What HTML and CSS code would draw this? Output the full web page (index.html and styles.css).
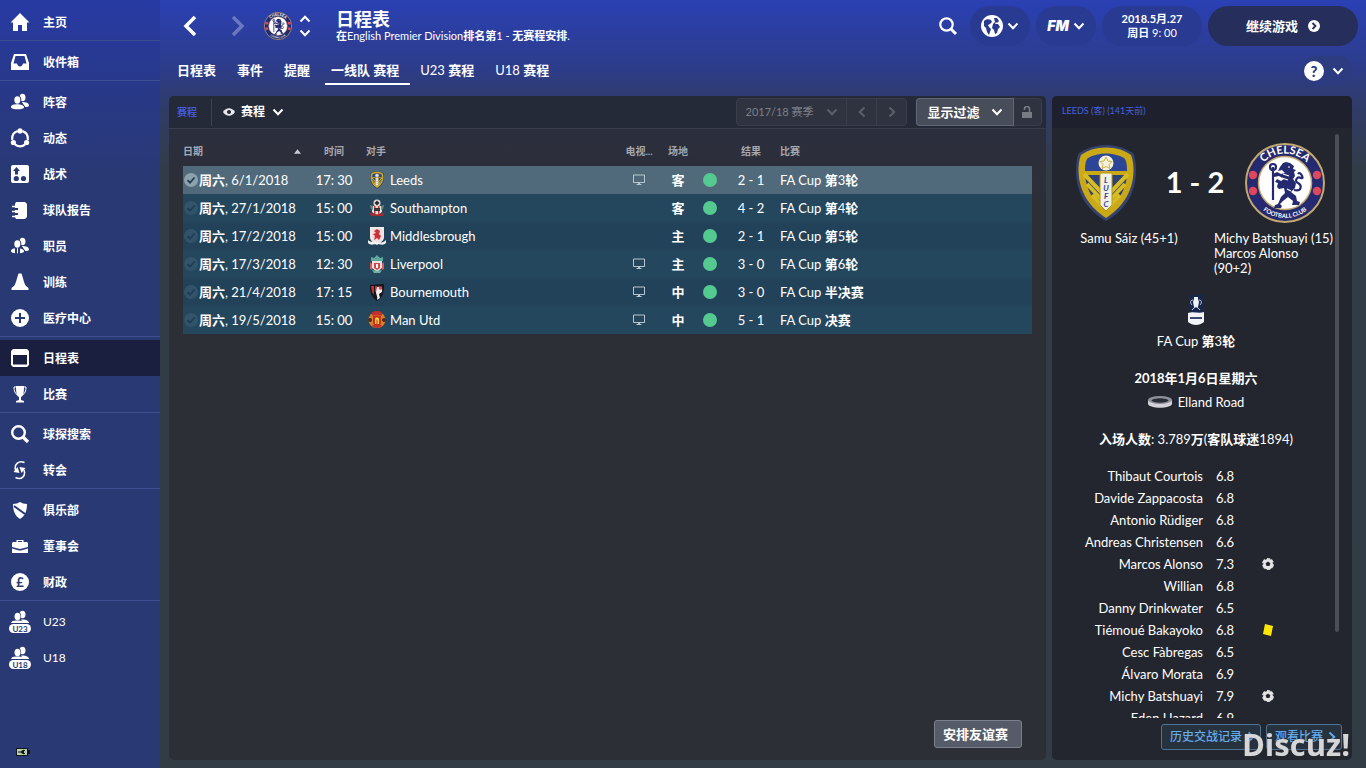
FILE: index.html
```html
<!DOCTYPE html>
<html lang="zh-CN">
<head>
    <meta charset="UTF-8">
    <meta name="viewport" content="width=device-width, initial-scale=1.0">
    <title>日程表</title>
    <link rel="stylesheet" href="styles.css">
</head>
<body>
    <!-- shared icons -->
    <svg class="defs" aria-hidden="true">
        <symbol id="chev" viewBox="0 0 12 8"><path d="M1.5 1.5 6 6.2 10.500 1.500" fill="none" stroke="currentColor" stroke-width="2"/></symbol>
        <symbol id="people" viewBox="0 0 20 20">
            <ellipse cx="12.500" cy="5.500" rx="3" ry="3.800"/><path d="M12 10c4 0 7 1 7 3.500 0 1.200-2 1.500-4 1.500z"/>
            <ellipse cx="7.500" cy="8" rx="3.800" ry="4.300" class="cut"/><path d="M0 16c0-4 4-4.500 8-4.500s7 1.500 7 4.500z" class="cut"/>
            <ellipse cx="7.300" cy="8" rx="3" ry="3.700"/><path d="M1 15c0-2 3-2.700 6.300-2.700S14 13.300 14 15.300c0 1.500-3 2-6.500 2S1 16.800 1 15z"/>
        </symbol>
        <symbol id="team" viewBox="0 0 24 24">
            <ellipse cx="14.500" cy="4.500" rx="3" ry="3.800"/><path d="M13 9.500c4-.5 8 1 8 3.500h-6z"/>
            <ellipse cx="9.500" cy="6.500" rx="3.600" ry="4.400" class="cut"/><ellipse cx="9.500" cy="6.500" rx="3" ry="3.800"/>
            <path d="M3 13c1-2.500 4-2.500 6.500-2.500S15.500 11 16 13z"/>
            <rect x="1" y="14" width="22" height="9" rx="4.500"/>
        </symbol>
        <symbol id="tick" viewBox="0 0 14 14"><circle cx="7" cy="7" r="7" fill="currentColor"/><path d="M3.500 7.200 6 9.700 10.500 4.500" fill="none" class="tick-mark" stroke-width="1.700"/></symbol>
        <symbol id="tv" viewBox="0 0 14 12"><path d="M1.500 1h11v7.500h-11zM4.500 10.500h5" fill="none" stroke="#b8c8d2" stroke-width="1"/><path d="M6 9h2v1.500H6z" fill="#b8c8d2"/></symbol>
        <symbol id="ball" viewBox="0 0 14 14"><circle cx="7" cy="7" r="6" fill="#e4e4e6"/><path d="m7 4.500 2.400 1.700-.9 2.800h-3l-.9-2.800z" fill="#23262e"/><path d="M3 1.500 5 3 6.500.5zM13.500 5l-2.300.8 2 2.200zM.5 6l2.200.5L.8 9zM4 13.500l.5-2 2 1.800zM12 12l-2-.8L9 13.500zM9.500 1l-.8 1.500L11 2z" fill="#23262e"/></symbol>
        <symbol id="leeds" viewBox="0 0 62 78">
            <path d="M31 1C43 1 51 5 58 9c2 3 3 10 3 18 0 25-14 41-30 50C15 68 1 52 1 27 1 19 2 12 4 9 11 5 19 1 31 1z" fill="#34426f"/>
            <path d="M31 3.500c11 0 19 3 25 7.500 2 5 2.500 10 2.500 16C58 50 45 65 31 74 17 65 4 50 3.500 27c0-6 .5-11 2.500-16 6-4.500 14-7.500 25-7.500z" fill="#cba916"/>
            <path d="M10 27c0-8 1-11 3-13 10-6 26-6 36 0 2 2 3 5 3 13z" fill="#2d4596"/>
            <path d="M10 31h16v32C17 55 11 44 10 31zM52 31H36v32c9-8 15-19 16-32z" fill="#2c4275"/>
            <path d="M9 30 27 49M12 40l15 16M17 51l10 11M53 30 35 49M50 40 35 56M45 51 35 62" stroke="#d8bd22" stroke-width="4"/>
            <path d="M25 29h12v32l-6 6-6-6z" fill="#f2f1e6" stroke="#b7960c"/>
            <circle cx="31" cy="19" r="7.500" fill="#f4f2df"/><path d="m31 13 2 4 4 .5-3 3 1 4-4-2-4 2 1-4-3-3 4-.5z" fill="none" stroke="#c9ae3d"/>
            <g class="lufc"><text x="31" y="39">L</text><text x="31" y="47">U</text><text x="31" y="55">F</text><text x="31" y="63">C</text></g>
        </symbol>
        <symbol id="chelsea" viewBox="0 0 80 80">
            <circle cx="40" cy="40" r="39" fill="#252a70" stroke="#c3a970" stroke-width="2"/>
            <circle cx="40" cy="40" r="26.500" fill="#fff" stroke="#c3a970" stroke-width="1.500"/>
            <path id="arc-top" d="M10.500 40a29.500 29.500 0 0 1 59 0" fill="none"/>
            <path id="arc-bottom" d="M5 40a35 35 0 0 0 70 0" fill="none"/>
            <text class="crest-top"><textPath href="#arc-top" startOffset="50%">CHELSEA</textPath></text>
            <text class="crest-bottom"><textPath href="#arc-bottom" startOffset="50%">FOOTBALL CLUB</textPath></text>
            <g fill="#e0475c"><circle cx="8" cy="32" r="4.200"/><circle cx="8" cy="48" r="4.200"/><circle cx="72" cy="32" r="4.200"/><circle cx="72" cy="48" r="4.200"/></g>
            <g fill="#252a70"><path d="m38 20 3-1 4 1 4 3-1 3 3 1-2 2 1 4-2 3 3 4-1 5-4 4 5 4 1 5 3 1-1 3h-7l1-4-5-4-5 4-3 3 2 2-1 2h-7l1-3 3-1 3-7 4-4-1-5-5 1-2-2 1-4-3-1 2-3 4 2 3-2-5-3-5 1-1-3 4-2 4 2 4-1-3-3-4 1 2-4z"/></g>
            <path d="M28 24v33M25 24a3 3 0 1 0 6 0 3 3 0 1 0-6 0M49 47c8 2 8-5 4-7s-1-7 3-5-1-8-3-4" fill="none" stroke="#252a70" stroke-width="2.200"/>
            <path d="M43 24h2M38 31l6 2M37 35l6 2M42 46l4 2" stroke="#fff" stroke-width="1.200"/>
        </symbol>
    </svg>

    <div class="app">
        <nav class="sidebar">
            <ul>
                <li><a href="#"><svg viewBox="0 0 20 20"><path d="M10 1 .5 10.500H3V19h5v-6h4v6h5v-8.500h2.500z"/></svg><b>主页</b></a></li>
            </ul>
            <ul>
                <li><a href="#"><svg viewBox="0 0 20 20"><path fill-rule="evenodd" d="M4 2h12l3 9v7H1v-7zM5.500 4 3.500 11.500H7c.5 2 1.500 3 3 3s2.500-1 3-3h3.500L14.500 4z"/></svg><b>收件箱</b></a></li>
            </ul>
            <ul>
                <li><a href="#"><svg><use href="#people"/></svg><b>阵容</b></a></li>
                <li><a href="#"><svg viewBox="0 0 20 20"><circle cx="10" cy="10.500" r="7.800" fill="none" stroke="#fff" stroke-width="2.200" stroke-dasharray="11.300 5" stroke-dashoffset="-2.500" transform="rotate(-90 10 10.500)"/><circle cx="10" cy="2.900" r="2.600"/><circle cx="3.400" cy="14.500" r="2.600"/><circle cx="16.600" cy="14.500" r="2.600"/></svg><b>动态</b></a></li>
                <li><a href="#"><svg viewBox="0 0 20 20"><rect x="1" y="1" width="18" height="18" rx="2"/><g class="cut"><circle cx="6.300" cy="14.500" r="2.600"/><circle cx="13.500" cy="14.500" r="2.600"/><path d="M5 10.500V7H3l3.500-4L10 7H8v3.500z"/></g></svg><b>战术</b></a></li>
                <li><a href="#"><svg viewBox="0 0 20 20"><path d="M6 2h9l2 2v13l-2 2H6l-1-2v-2h3v-2H5v-3h3V8H5V4z"/><path d="M2 6.500h5M2 11.500h5M2 16.500h5" stroke="#fff" stroke-width="1.500"/></svg><b>球队报告</b></a></li>
                <li><a href="#"><svg viewBox="0 0 20 20"><use href="#people"/><path d="M6 12v6M9 12v6" class="cut-line"/></svg><b>职员</b></a></li>
                <li><a href="#"><svg viewBox="0 0 20 20"><path d="M8.500 1.500h3c1.500 4 2 8 4 12l3 2.500v2h-17v-2l3-2.500c2-4 2.500-8 4-12z"/></svg><b>训练</b></a></li>
                <li><a href="#"><svg viewBox="0 0 20 20"><circle cx="10" cy="10" r="9"/><path d="M10 5v10M5 10h10" class="cut-line"/></svg><b>医疗中心</b></a></li>
            </ul>
            <ul>
                <li><a href="#" class="active"><svg viewBox="0 0 20 20"><path fill-rule="evenodd" d="M3 1h14l2 2v14l-2 2H3l-2-2V3zM3 7v9.500h14V7z"/></svg><b>日程表</b></a></li>
                <li><a href="#"><svg viewBox="0 0 20 20"><path d="M6 2h8c0 6-.5 10-3 11v3l3 1v1.500H6V17l3-1v-3C6.500 12 6 8 6 2z"/><path d="M6 3H4c0 4 1 6.500 3.500 8M14 3h2c0 4-1 6.500-3.500 8" fill="none" stroke="#fff"/></svg><b>比赛</b></a></li>
            </ul>
            <ul>
                <li><a href="#"><svg viewBox="0 0 20 20"><circle cx="8.500" cy="8.500" r="6.300" fill="none" stroke="#fff" stroke-width="2.400"/><path d="m13 13 5 5" stroke="#fff" stroke-width="3.200"/></svg><b>球探搜索</b></a></li>
                <li><a href="#"><svg viewBox="0 0 20 20"><path d="M14.500 2.500C9 0 4 4 5.500 10M5.500 17.500c6 3 10.500-1.500 8.500-7.500" fill="none" stroke="#fff" stroke-width="1.500"/><path d="m3.500 12 4-5 2 6zM15.500 8l-4 5-2-6z"/></svg><b>转会</b></a></li>
            </ul>
            <ul>
                <li><a href="#"><svg viewBox="0 0 20 20"><path d="M3 4c3 0 5-1 7-2 2 1 4 2 7 2 0 7-2 12-7 15C5 16 3 11 3 4z"/><path d="m4 6 11 8" class="cut-line"/></svg><b>俱乐部</b></a></li>
                <li><a href="#"><svg viewBox="0 0 20 20"><path fill-rule="evenodd" d="M6.500 6V4h7v2H17l1 1v4l-8 2-8-2V7l1-1zM8 6h4V5H8zM2 12.500l7 2h2l7-2V17H2z"/></svg><b>董事会</b></a></li>
                <li><a href="#"><svg viewBox="0 0 20 20"><circle cx="10" cy="10" r="9"/><text x="10" y="14.500" class="pound">£</text></svg><b>财政</b></a></li>
            </ul>
            <ul>
                <li><a href="#"><svg class="wide" viewBox="0 0 24 24"><use href="#team"/><text x="12" y="21.500" class="age">U23</text></svg>U23</a></li>
                <li><a href="#"><svg class="wide" viewBox="0 0 24 24"><use href="#team"/><text x="12" y="21.500" class="age">U18</text></svg>U18</a></li>
            </ul>
            <svg class="battery" viewBox="0 0 14 10"><path d="M0 1h12v2h2v4h-2v2H0z" fill="#11151c"/><path d="M1 2h10v6H1z" fill="#b9d3a8"/><path d="M2 5h3m4-1.500H7.500m1.500 3H7.500" stroke="#11151c"/><path d="M5 4l3-1.500v5L5 6z" fill="#11151c"/></svg>
        </nav>

        <div class="page">
            <header>
                <div class="topbar">
                    <button class="nav-btn" aria-label="后退"><svg width="16" height="22" viewBox="0 0 16 22"><path d="M13 2 4 11l9 9" fill="none" stroke="#fff" stroke-width="3.500"/></svg></button>
                    <button class="nav-btn off" aria-label="前进"><svg width="16" height="22" viewBox="0 0 16 22"><path d="m3 2 9 9-9 9" fill="none" stroke="#fff" stroke-width="3.500"/></svg></button>
                    <svg class="club"><use href="#chelsea"/></svg>
                    <div class="updown">
                        <button aria-label="上一个"><svg class="chev flip"><use href="#chev"/></svg></button>
                        <button aria-label="下一个"><svg class="chev"><use href="#chev"/></svg></button>
                    </div>
                    <div class="title">
                        <h1>日程表</h1>
                        <p><b>在</b>English Premier Division<b>排名第</b>1 - <b>无赛程安排</b>.</p>
                    </div>
                    <button class="search" aria-label="搜索"><svg width="20" height="20" viewBox="0 0 20 20"><circle cx="8.500" cy="8.500" r="6.200" fill="none" stroke="#fff" stroke-width="2.200"/><path d="m13 13 5 5" stroke="#fff" stroke-width="3"/></svg></button>
                    <button class="pill" aria-label="世界"><svg width="22" height="22" viewBox="0 0 22 22"><circle cx="11" cy="11" r="11" fill="#fff"/><path d="M3 6c2-2 5-2 7-1l1 2-2 2-2 1 1 2 2 2-1 3-1 3-2-3-1-4-2-2zM13 3l3 0 2 3-2 2-1-1-1 2 3 0 2 3-2 2-1 4-2 1-1-4-2-2 1-4 2-2z" fill="#2a3a8c"/></svg><svg class="chev"><use href="#chev"/></svg></button>
                    <button class="pill fm"><i>FM</i><svg class="chev"><use href="#chev"/></svg></button>
                    <div class="pill date"><b>2018.5月.27</b><span><b>周日</b> 9: 00</span></div>
                    <button class="pill continue">继续游戏<svg width="12" height="12" viewBox="0 0 12 12"><circle cx="6" cy="6" r="6" fill="#fff"/><path d="m4.500 3 3 3-3 3" fill="none" stroke="#262f5c" stroke-width="1.800"/></svg></button>
                </div>
                <div class="subbar">
                    <nav class="tabs">
                        <a href="#"><b>日程表</b></a>
                        <a href="#"><b>事件</b></a>
                        <a href="#"><b>提醒</b></a>
                        <a href="#" class="on"><b>一线队 赛程</b></a>
                        <a href="#">U23 <b>赛程</b></a>
                        <a href="#">U18 <b>赛程</b></a>
                    </nav>
                    <button class="help" aria-label="帮助"><span>?</span><svg class="chev"><use href="#chev"/></svg></button>
                </div>
            </header>

            <main>
                <section class="panel fixtures">
                    <div class="bar">
                        <h2>赛程</h2>
                        <label class="view">
                            <svg width="12" height="8" viewBox="0 0 12 8"><path d="M0 4c3-5 9-5 12 0-3 5-9 5-12 0z" fill="#e6e8ec"/><circle cx="6" cy="4" r="2" fill="#252a38"/></svg>
                            <select aria-label="视图"><option>赛程</option></select>
                            <svg class="chev"><use href="#chev"/></svg>
                        </label>
                        <div class="group season">
                            <label><select aria-label="赛季"><option>2017/18 赛季</option></select><svg class="chev"><use href="#chev"/></svg></label>
                            <button aria-label="上个赛季"><svg class="chev left"><use href="#chev"/></svg></button>
                            <button aria-label="下个赛季"><svg class="chev right"><use href="#chev"/></svg></button>
                        </div>
                        <div class="group">
                            <button class="filter">显示过滤<svg class="chev"><use href="#chev"/></svg></button>
                            <button aria-label="锁定"><svg width="12" height="12" viewBox="0 0 12 12"><path d="M1 6h10v6H1z" fill="#777b84"/><path d="M3.500 4V3a2.500 2.500 0 0 1 5 0v3" fill="none" stroke="#777b84" stroke-width="1.600"/></svg></button>
                        </div>
                    </div>

                    <table class="matches">
                        <thead>
                            <tr>
                                <th class="c-date">日期<svg class="sort" viewBox="0 0 8 5"><path d="M4 0l4 5H0z" fill="#c8cad0"/></svg></th>
                                <th class="c-time">时间</th>
                                <th class="c-team">对手</th>
                                <th class="c-tv">电视...</th>
                                <th class="c-venue">场地</th>
                                <th class="c-dot"></th>
                                <th class="c-result">结果</th>
                                <th class="c-comp">比赛</th>
                            </tr>
                        </thead>
                        <tbody>
                            <tr class="selected">
                                <td><svg class="tick"><use href="#tick"/></svg><b>周六</b>, 6/1/2018</td>
                                <td>17: 30</td>
                                <td><svg class="crest"><use href="#leeds"/></svg>Leeds</td>
                                <td><svg class="tv"><use href="#tv"/></svg></td>
                                <td><b>客</b></td>
                                <td><span class="win"></span></td>
                                <td>2 - 1</td>
                                <td>FA Cup <b>第</b>3<b>轮</b></td>
                            </tr>
                            <tr>
                                <td><svg class="tick"><use href="#tick"/></svg><b>周六</b>, 27/1/2018</td>
                                <td>15: 00</td>
                                <td><svg class="crest" viewBox="0 0 18 18"><circle cx="9" cy="4" r="3.500" fill="#e8dfd4"/><path d="M6.500 4 9 1.500 11.500 4 9 6.500z" fill="#2a2b30"/><path d="M4 7h10v6l-5 4-5-4z" fill="#d9e4dc"/><path d="M6 7h1.500v8H6zM10 7h1.500v8H10z" fill="#c9343a"/><path d="M2 6l3 1v4L3 10zM16 6l-3 1v4l2-1z" fill="#6b8a76"/><path d="M1 13c4 3 12 3 16 0l-2 4H3z" fill="#a52a30"/><path d="M6 9h6v3H6z" fill="#393439"/></svg>Southampton</td>
                                <td></td>
                                <td><b>客</b></td>
                                <td><span class="win"></span></td>
                                <td>4 - 2</td>
                                <td>FA Cup <b>第</b>4<b>轮</b></td>
                            </tr>
                            <tr>
                                <td><svg class="tick"><use href="#tick"/></svg><b>周六</b>, 17/2/2018</td>
                                <td>15: 00</td>
                                <td><svg class="crest" viewBox="0 0 18 18"><path d="M2 0h14v10c0 4-4 6-7 8-3-2-7-4-7-8z" fill="#eee9e8"/><path d="M4 2h10v8c0 2-2 4-5 5-3-1-5-3-5-5z" fill="#f5dcdc"/><path d="M6 4l3-2 3 2-1 3 2 2-2 4-2-2-3 2 1-4-2-2 3-1z" fill="#cc2f36"/><path d="M0 13c3 3 6 1 9 2s6 1 9-2v3c-3 3-6 1-9 1s-6 2-9-1z" fill="#f2f2f2"/></svg>Middlesbrough</td>
                                <td></td>
                                <td><b>主</b></td>
                                <td><span class="win"></span></td>
                                <td>2 - 1</td>
                                <td>FA Cup <b>第</b>5<b>轮</b></td>
                            </tr>
                            <tr>
                                <td><svg class="tick"><use href="#tick"/></svg><b>周六</b>, 17/3/2018</td>
                                <td>12: 30</td>
                                <td><svg class="crest" viewBox="0 0 18 18"><path d="M3 2l3 1 3-3 3 3 3-1v4H3z" fill="#5ca99b"/><path d="M4 6h10v7l-5 4-5-4z" fill="#f0dfdf"/><path d="M6 8h6v5l-3 2-3-2z" fill="#d2454d"/><path d="M8 9h2v4H8z" fill="#fff"/><path d="M2 7l2 2v6l-2-1zM16 7l-2 2v6l2-1z" fill="#d15d5d"/><path d="M4 15c3 1 7 1 10 0l-2 3H6z" fill="#71b2a6"/></svg>Liverpool</td>
                                <td><svg class="tv"><use href="#tv"/></svg></td>
                                <td><b>主</b></td>
                                <td><span class="win"></span></td>
                                <td>3 - 0</td>
                                <td>FA Cup <b>第</b>6<b>轮</b></td>
                            </tr>
                            <tr>
                                <td><svg class="tick"><use href="#tick"/></svg><b>周六</b>, 21/4/2018</td>
                                <td>17: 15</td>
                                <td><svg class="crest" viewBox="0 0 18 18"><path d="M2 2c5 0 9-1 14-1 0 9-1 13-7 17C3 14 2 9 2 2z" fill="#16151a"/><path d="M3 3h3v9L4 9zM7 3h2v6H7z" fill="#c62e38"/><path d="M9 4c3-1 6 1 5 5l-3 2 1 4-3 2c1-4-1-5-1-8z" fill="#f0eded"/><circle cx="12.500" cy="5" r="1.800" fill="#db4850"/></svg>Bournemouth</td>
                                <td><svg class="tv"><use href="#tv"/></svg></td>
                                <td><b>中</b></td>
                                <td><span class="win"></span></td>
                                <td>3 - 0</td>
                                <td>FA Cup <b>半决赛</b></td>
                            </tr>
                            <tr>
                                <td><svg class="tick"><use href="#tick"/></svg><b>周六</b>, 19/5/2018</td>
                                <td>15: 00</td>
                                <td><svg class="crest" viewBox="0 0 18 18"><ellipse cx="9" cy="9" rx="8.500" ry="8" fill="#dd7d25"/><path d="M4 1.500c3-2 7-2 10 0v3H4zM4 14h10c-2 4-8 4-10 0z" fill="#c3302b"/><circle cx="2" cy="9" r="2" fill="#4b2a20"/><circle cx="16" cy="9" r="2" fill="#4b2a20"/><path d="M5 5h8v6c0 3-2 4-4 4s-4-1-4-4z" fill="#c43124"/><path d="M7 13V8c0-2 4-2 4 0v5H9.500V8.500h-1V13z" fill="#f7d33a"/></svg>Man Utd</td>
                                <td><svg class="tv"><use href="#tv"/></svg></td>
                                <td><b>中</b></td>
                                <td><span class="win"></span></td>
                                <td>5 - 1</td>
                                <td>FA Cup <b>决赛</b></td>
                            </tr>
                        </tbody>
                    </table>

                    <button class="friendly">安排友谊赛</button>
                </section>

                <aside class="panel detail">
                    <h2>LEEDS (客) (141天前)</h2>
                    <div class="scroll">
                        <div class="score">
                            <svg class="home" viewBox="0 0 62 78"><use href="#leeds"/></svg>
                            <strong>1 - 2</strong>
                            <svg class="away" viewBox="0 0 80 80"><use href="#chelsea"/></svg>
                        </div>
                        <div class="scorers">
                            <p>Samu Sáiz (45+1)</p>
                            <p>Michy Batshuayi (15)<br>Marcos Alonso (90+2)</p>
                        </div>
                        <div class="info">
                            <svg class="cup" viewBox="0 0 18 30"><path d="M2 0h14v19H2z" fill="#18284c"/><path d="M7 2h4v2l1 3-1 5H7L6 7l1-3z" fill="#eef1f6"/><path d="M6 5c-3 0-3 3-1 5M12 5c3 0 3 3 1 5M5 15l3-3h2l3 3" fill="none" stroke="#c6cfdd"/><path d="M1 18c5-2 11 1 16-1v10c-5 4-11 4-16 0z" fill="#f1f3f8"/><path d="M3 22h12v2H3z" fill="#3b4872"/></svg>
                            <p>FA Cup <b>第</b>3<b>轮</b></p>
                            <p class="day"><b>2018年1月6日星期六</b></p>
                            <p class="ground"><svg width="24" height="12" viewBox="0 0 24 12"><path d="M0 4v4c2 5 22 5 24 0V4z" fill="#d4d3da"/><ellipse cx="12" cy="4" rx="12" ry="4" fill="#91909a"/><ellipse cx="12" cy="4.500" rx="8.500" ry="2.200" fill="#2a2c34"/></svg>Elland Road</p>
                            <p class="crowd"><b>入场人数</b>: 3.789<b>万</b>(<b>客队球迷</b>1894)</p>
                        </div>
                        <table class="players">
                            <tr><td>Thibaut Courtois</td><td>6.8</td><td></td></tr>
                            <tr><td>Davide Zappacosta</td><td>6.8</td><td></td></tr>
                            <tr><td>Antonio Rüdiger</td><td>6.8</td><td></td></tr>
                            <tr><td>Andreas Christensen</td><td>6.6</td><td></td></tr>
                            <tr><td>Marcos Alonso</td><td>7.3</td><td><svg class="ball"><use href="#ball"/></svg></td></tr>
                            <tr><td>Willian</td><td>6.8</td><td></td></tr>
                            <tr><td>Danny Drinkwater</td><td>6.5</td><td></td></tr>
                            <tr><td>Tiémoué Bakayoko</td><td>6.8</td><td><svg class="ball" viewBox="0 0 14 14"><path d="M4 1l8 2-2 10-8-2z" fill="#ffe500"/></svg></td></tr>
                            <tr><td>Cesc Fàbregas</td><td>6.5</td><td></td></tr>
                            <tr><td>Álvaro Morata</td><td>6.9</td><td></td></tr>
                            <tr><td>Michy Batshuayi</td><td>7.9</td><td><svg class="ball"><use href="#ball"/></svg></td></tr>
                            <tr><td>Eden Hazard</td><td>6.9</td><td></td></tr>
                        </table>
                    </div>
                    <div class="thumb"></div>
                    <div class="actions">
                        <button>历史交战记录<svg class="chev right"><use href="#chev"/></svg></button>
                        <button>观看比赛<svg class="chev right"><use href="#chev"/></svg></button>
                    </div>
                </aside>
            </main>
        </div>
    </div>
    <div class="watermark">Discuz!</div>
</body>
</html>
```
FILE: styles.css
```css
*{
    box-sizing: border-box;
}
body{
    margin: 0;
    color: white;
    font-family: Lato, "Noto Sans CJK SC", sans-serif;
    font-size: 13px;
    line-height: 20px;
    background: linear-gradient(#2a40b4 0, #2d3c88 70px, #303c66 110px, #323c48 170px, #323c44 100%);
}
h1,h2,p,ul{
    margin: 0;
    padding: 0;
}
a{
    color: white;
    text-decoration: none;
}
button,select{
    margin: 0;
    padding: 0;
    border: none;
    background: none;
    color: inherit;
    font: inherit;
    appearance: none;
}
svg{
    display: block;
    flex: none;
}
.defs{
    display: none;
}
.app{
    display: flex;
    height: 100vh;
    overflow: hidden;
}

.chev{
    width: 12px;
    height: 8px;
}
.flip{
    transform: rotate(180deg);
}
.left{
    transform: rotate(90deg);
}
.right{
    transform: rotate(-90deg);
}

/* sidebar */
.sidebar{
    width: 160px;
    flex: none;
    display: flex;
    flex-direction: column;
    background: linear-gradient(#273aa4 0, #283888 90px, #293973 180px, #293973 100%);
}
.sidebar ul{
    list-style: none;
    border-top: 1px solid #3d4e8e;
    padding-top: 3px;
}
.sidebar ul:first-child{
    border-top-color: transparent;
}
.sidebar a{
    display: flex;
    align-items: center;
    gap: 13px;
    height: 36px;
    padding-left: 10px;
    font-size: 12px;
}
.sidebar b{
    padding-top: 2px;
}
.sidebar a svg{
    width: 20px;
    height: 20px;
    fill: white;
}
.sidebar a svg.wide{
    width: 24px;
    height: 24px;
    margin: 0 -2px;
}
.sidebar .active{
    background-color: #1a1f3f;
}
.sidebar .cut{
    fill: #293973;
}
.cut{
    fill: #293973;
}
.cut-line{
    stroke: #293973;
    stroke-width: 2;
    fill: none;
}
.pound{
    font: bold 13px Lato, sans-serif;
    fill: #293973;
    text-anchor: middle;
}
.age{
    font: bold 8px Lato, sans-serif;
    fill: #293973;
    text-anchor: middle;
}
.battery{
    width: 14px;
    height: 10px;
    margin: auto 0 11px 16px;
}

/* header */
.page{
    flex: 1;
    min-width: 0;
    display: flex;
    flex-direction: column;
}
.topbar{
    display: flex;
    align-items: center;
    height: 52px;
    padding: 0 8px 0 14px;
}
.nav-btn{
    width: 32px;
    margin-right: 16px;
}
.nav-btn svg{
    margin: 0 auto;
}
.off{
    opacity: 0.3;
}
.club{
    width: 28px;
    height: 28px;
    margin-left: -6px;
}
.updown{
    display: flex;
    flex-direction: column;
    gap: 6px;
    margin-left: 7px;
}
.updown button{
    height: 8px;
}
.title{
    flex: 1;
    margin-left: 25px;
}
.title h1{
    font-size: 18px;
    line-height: 20px;
}
.title p{
    font-size: 11px;
    line-height: 14px;
}
.search{
    margin-right: 12px;
}
.pill{
    display: flex;
    align-items: center;
    justify-content: center;
    gap: 4px;
    height: 40px;
    width: 60px;
    margin-right: 6px;
    border-radius: 20px;
    background-color: #293a92;
}
.fm{
    font-family: Inter, Lato, sans-serif;
    font-weight: 900;
    font-size: 14px;
}
.date{
    width: 100px;
    flex-direction: column;
    gap: 0;
    font-size: 11px;
    line-height: 14px;
}
.continue{
    width: 150px;
    margin: 0;
    gap: 10px;
    font-weight: bold;
    background-color: #262f5c;
}
.subbar{
    display: flex;
    justify-content: space-between;
    height: 44px;
    padding: 4px 14px 11px 11px;
}
.tabs{
    display: flex;
    gap: 4px;
}
.tabs a{
    padding: 4px 11px 0 6px;
    border-bottom: 2px solid transparent;
}
.tabs .on{
    border-color: white;
}
.help{
    display: flex;
    align-items: center;
    gap: 8px;
    padding: 0 8px 0 2px;
    border-radius: 14px;
    background-color: #2d3b80;
}
.help span{
    width: 20px;
    border-radius: 50%;
    background-color: white;
    color: #2d3b80;
    font-weight: 900;
    font-size: 15px;
}

/* panels */
main{
    flex: 1;
    min-height: 0;
    display: flex;
    gap: 6px;
    padding: 0 14px 8px 9px;
}
.panel{
    border-radius: 5px;
    display: flex;
    flex-direction: column;
    overflow: hidden;
}
.fixtures{
    flex: 1;
    background: linear-gradient(#2b2e3d 32px, #2d2f37 110px);
}
.bar{
    display: flex;
    align-items: center;
    height: 33px;
    padding: 0 4px 0 8px;
    background-color: #252a38;
    border-bottom: 1px solid #383d4b;
}
.bar h2{
    font-size: 10px;
    color: #4258d8;
    padding-right: 14px;
    line-height: 27px;
    border-right: 1px solid #3d4250;
}
.view{
    display: flex;
    align-items: center;
    gap: 6px;
    margin: 0 auto 0 11px;
    font-weight: bold;
    font-size: 12px;
}
.group{
    display: flex;
    margin-left: 9px;
    border: 1px solid #3a3e4a;
    border-radius: 4px;
    background-color: #2f3340;
}
.group > *{
    display: flex;
    align-items: center;
    justify-content: center;
    height: 26px;
    width: 28px;
}
.season{
    color: #7c808a;
    font-size: 11px;
}
.season label{
    width: 109px;
    gap: 11px;
}
.season .chev{
    color: #5b606c;
}
.season button{
    width: 30px;
    border-left: 1px solid #3a3e4a;
}
.group .filter{
    width: 96px;
    gap: 11px;
    font-weight: bold;
    background-color: #484d5a;
    border-radius: 3px 0 0 3px;
    box-shadow: 0 0 0 1px #62677a;
}

.matches{
    margin: 9px 14px 0;
    border-collapse: collapse;
    table-layout: fixed;
}
.matches th{
    height: 28px;
    padding: 0 0 2px;
    color: #a6a8ae;
    font-size: 10px;
    text-align: center;
}
.matches td{
    height: 28px;
    padding: 0;
    text-align: center;
    white-space: nowrap;
}
.matches tbody tr{
    background-color: #24475d;
}
.matches tbody tr:nth-child(odd){
    background-color: #22425a;
}
.matches tbody tr.selected{
    background-color: #506a7b;
}
.matches .c-date{
    width: 122px;
    text-align: left;
}
.c-time{
    width: 58px;
}
.matches .c-team{
    padding-left: 3px;
    text-align: left;
}
.c-tv{
    width: 38px;
}
.c-venue{
    width: 40px;
}
.c-dot{
    width: 24px;
}
.c-result{
    width: 58px;
}
.matches .c-comp{
    width: 252px;
    text-align: left;
}
.matches td:first-child,.matches td:nth-child(3),.matches td:last-child{
    text-align: left;
}
.sort{
    float: right;
    width: 7px;
    height: 5px;
    margin: 8px 4px 0 0;
}
.tick{
    float: left;
    width: 14px;
    height: 14px;
    margin: 3px 1px 0;
    color: #31546a;
}
.tick-mark{
    stroke: #1f3c51;
}
.selected .tick{
    color: #8ba1ac;
}
.selected .tick .tick-mark,.selected .tick-mark{
    stroke: #4fb99a;
}
.crest{
    float: left;
    width: 18px;
    height: 18px;
    margin: 1px 4px 0 5px;
}
.tv{
    width: 14px;
    height: 12px;
    margin: 0 auto;
}
.win{
    display: block;
    width: 14px;
    height: 14px;
    margin: 0 auto;
    border-radius: 50%;
    background-color: #54ca91;
}
.friendly{
    margin: auto 24px 12px auto;
    padding: 0 13px 0 8px;
    height: 28px;
    font-weight: bold;
    border: 1px solid #7b828e;
    border-radius: 3px;
    background-color: #555b68;
}

/* match detail */
.detail{
    position: relative;
    width: 300px;
    flex: none;
    background-color: #23262e;
}
.detail h2{
    padding: 5px 10px 7px;
    color: #4360e0;
    font-size: 9px;
    font-weight: normal;
    background-color: #1e212d;
}
.scroll{
    flex: 1;
    min-height: 0;
    overflow: hidden;
    padding: 15px 12px 0 0;
}
.score{
    display: flex;
    align-items: center;
    justify-content: space-between;
    padding: 0 15px 0 23px;
}
.score strong{
    font-size: 29px;
    line-height: 36px;
    margin: 0 0 2px 8px;
}
.home{
    width: 62px;
    height: 78px;
}
.away{
    width: 80px;
    height: 80px;
}
.lufc{
    font: italic bold 8px Lato, sans-serif;
    fill: #2d4596;
    text-anchor: middle;
}
.crest-top{
    font: bold 11px Lato, sans-serif;
    fill: white;
    text-anchor: middle;
}
.crest-bottom{
    font: bold 6px Lato, sans-serif;
    fill: white;
    text-anchor: middle;
}
.scorers{
    display: flex;
    justify-content: space-between;
    margin-top: 8px;
    line-height: 15px;
}
.scorers p:first-child{
    width: 154px;
    text-align: center;
}
.scorers p:last-child{
    width: 126px;
    padding-right: 4px;
}
.info{
    text-align: center;
}
.cup{
    width: 18px;
    height: 30px;
    margin: 19px auto 6px;
}
.day{
    margin: 17px 0 4px;
}
.ground{
    display: flex;
    align-items: center;
    justify-content: center;
    gap: 6px;
}
.crowd{
    margin: 17px 0 16px;
}
.players{
    width: 100%;
    border-collapse: collapse;
}
.players td{
    height: 22px;
    padding: 0;
}
.players td:first-child{
    width: 151px;
    text-align: right;
}
.players td:nth-child(2){
    width: 58px;
    padding-left: 13px;
}
.ball{
    width: 14px;
    height: 14px;
}
.thumb{
    position: absolute;
    top: 38px;
    right: 13px;
    bottom: 128px;
    width: 4px;
    border-radius: 2px;
    background-color: #4c4e56;
}
.actions{
    display: flex;
    justify-content: flex-end;
    gap: 5px;
    padding: 6px 10px 10px;
}
.actions button{
    display: flex;
    align-items: center;
    gap: 3px;
    height: 26px;
    padding: 0 3px 0 8px;
    color: #64acec;
    font-size: 12px;
    font-weight: 500;
    border: 1px solid #4f7596;
    border-radius: 3px;
    background-color: #27323f;
}
.watermark{
    position: fixed;
    right: 16px;
    bottom: 4px;
    font: bold 31px/40px "Open Sans", sans-serif;
    color: #d6d6d8;
    text-shadow: 0 0 2px #333;
    pointer-events: none;
}
```
